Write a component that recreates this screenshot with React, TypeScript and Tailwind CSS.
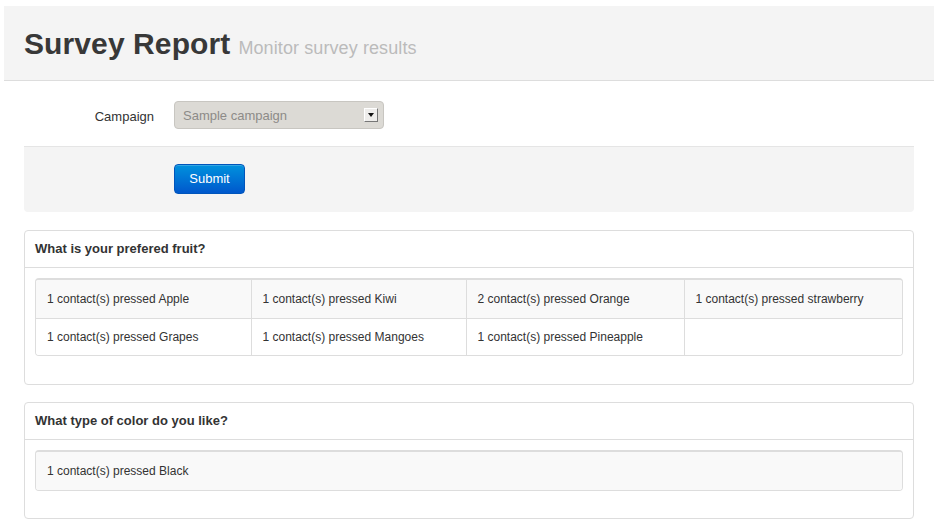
import React from "react";

type Question = {
  title: string;
  rows: string[][];
};

const questions: Question[] = [
  {
    title: "What is your prefered fruit?",
    rows: [
      [
        "1 contact(s) pressed Apple",
        "1 contact(s) pressed Kiwi",
        "2 contact(s) pressed Orange",
        "1 contact(s) pressed strawberry",
      ],
      [
        "1 contact(s) pressed Grapes",
        "1 contact(s) pressed Mangoes",
        "1 contact(s) pressed Pineapple",
        "",
      ],
    ],
  },
  {
    title: "What type of color do you like?",
    rows: [["1 contact(s) pressed Black"]],
  },
];

function ResultPanel({ q, first }: { q: Question; first: boolean }) {
  const multi = q.rows[0].length > 1;
  return (
    <div
      className={
        (first ? "mt-[18px] " : "mt-[17px] ") +
        "rounded-[4px] border border-[#dddddd] bg-white"
      }
    >
      <div className="h-[37px] border-b border-[#dddddd] px-[10px] flex items-center text-[13px] font-bold text-[#333]">
        {q.title}
      </div>
      <div className={"px-[10px] pt-[10px] " + (first ? "pb-[28px]" : "pb-[27px]")}>
        <div className="overflow-hidden rounded-[4px] border border-[#dddddd] border-t-2">
          <table className="w-full table-fixed border-collapse text-[12px] text-[#333]">
            {multi ? (
              <colgroup>
                <col className="w-[215px]" />
                <col className="w-[215px]" />
                <col className="w-[218px]" />
                <col />
              </colgroup>
            ) : null}
            <tbody>
              {q.rows.map((row, i) => (
                <tr
                  key={i}
                  className={
                    (i % 2 === 0 ? "bg-[#f9f9f9] " : "bg-white ") +
                    (i > 0 ? "border-t border-[#dddddd]" : "")
                  }
                >
                  {row.map((cell, j) => (
                    <td
                      key={j}
                      className={
                        (i === 0 ? "h-[38px] " : "h-[37px] ") +
                        "px-[11px] align-middle " +
                        (j > 0 ? "border-l border-[#dddddd]" : "")
                      }
                    >
                      {cell}
                    </td>
                  ))}
                </tr>
              ))}
            </tbody>
          </table>
        </div>
      </div>
    </div>
  );
}

export default function App() {
  return (
    <div
      className="min-h-[527px] bg-white pt-[6px] pl-[4px] pr-[5px]"
      style={{ fontFamily: '"Liberation Sans", Arial, sans-serif' }}
    >
      {/* page header */}
      <div className="h-[75px] border-b border-[#dddddd] bg-[#f4f4f4] px-5 flex items-center">
        <h1 className="flex items-baseline">
          <span className="text-[30px] font-bold text-[#383838] tracking-[0.1px]">
            Survey Report
          </span>
          <span className="ml-[8px] text-[18px] text-[#bbbbbb] tracking-[0.1px]">
            Monitor survey results
          </span>
        </h1>
      </div>

      <div className="px-5">
        {/* form */}
        <div className="mt-5 flex items-center">
          <label className="mt-[3px] w-[130px] text-right text-[13px] text-[#333]">Campaign</label>
          <div className="ml-5 flex h-[28px] w-[210px] items-center justify-between rounded-[4px] border border-[#c8c6c1] bg-[#dcdad5] pl-[8px] pr-[5px]">
            <span className="pt-[2px] text-[13px] text-[#8d8b88]">Sample campaign</span>
            <span className="flex h-[14px] w-[14px] items-center justify-center border border-t-white border-l-white border-r-[#777] border-b-[#777] bg-[#eeedeb]">
              <svg width="6" height="4" viewBox="0 0 6 4">
                <path d="M0 0h6L3 4z" fill="#111" />
              </svg>
            </span>
          </div>
        </div>

        <div className="mt-[17px] rounded-b-[4px] border-t border-[#e5e5e5] bg-[#f4f4f4] pl-[150px] pt-[17px] pb-[18px]">
          <button className="h-[30px] w-[71px] rounded-[4px] border border-[#0055bb] bg-gradient-to-b from-[#0091dd] to-[#0057cc] text-[13px] text-white shadow-[inset_0_1px_0_rgba(255,255,255,0.2)]">
            Submit
          </button>
        </div>

        {questions.map((q, i) => (
          <ResultPanel key={q.title} q={q} first={i === 0} />
        ))}
      </div>
    </div>
  );
}
